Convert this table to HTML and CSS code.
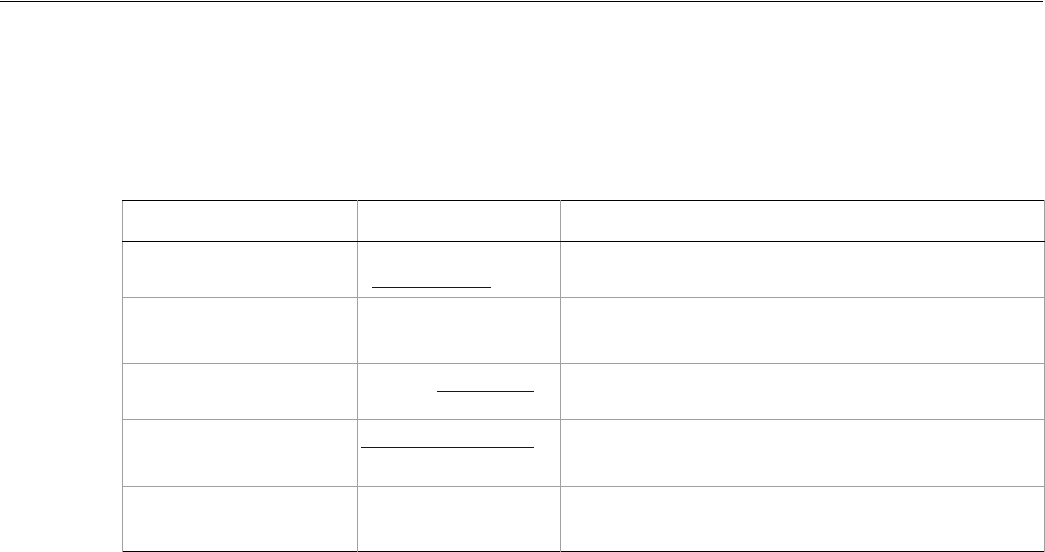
FILE: index.html
```html
<!DOCTYPE html>
<html>
<head>
<meta charset="utf-8">
<link rel="stylesheet" href="styles.css">
</head>
<body>
<div class="topbar"></div>
<main class="content">
  <table class="grid">
    <colgroup>
      <col class="c1"><col class="c2"><col class="c3">
    </colgroup>
    <thead>
      <tr class="r-head"><th></th><th></th><th></th></tr>
    </thead>
    <tbody>
      <tr class="r1"><td></td><td><a class="lnk lnk-a" href="#"></a></td><td></td></tr>
      <tr class="r2"><td></td><td></td><td></td></tr>
      <tr class="r3"><td></td><td><a class="lnk lnk-b" href="#"></a></td><td></td></tr>
      <tr class="r4"><td></td><td><a class="lnk lnk-c" href="#"></a></td><td></td></tr>
      <tr class="r5"><td></td><td></td><td></td></tr>
    </tbody>
  </table>
</main>
</body>
</html>
```
FILE: styles.css
```css
html, body {
  margin: 0;
  padding: 0;
  background: #fff;
  font-family: "Liberation Sans", Arial, sans-serif;
}
.topbar {
  margin-top: 1px;
  width: 1043px;
  border-top: 1px solid #000;
}
.content {
  padding: 198px 0 0 122px;
}
.grid {
  border-collapse: collapse;
  table-layout: fixed;
  border-top: 1px solid #000;
  border-bottom: 1px solid #000;
}
.c1 { width: 235px; }
.c2 { width: 203px; }
.c3 { width: 484px; }
.grid th, .grid td {
  padding: 0;
  vertical-align: top;
  border-left: 1px solid #a0a0a0;
  border-right: 1px solid #a0a0a0;
  border-top: 1px solid #a0a0a0;
}
.grid th {
  border-top: 1px solid #000;
  border-bottom: 1px solid #000;
}
.r-head { height: 41px; }
.r1 { height: 56px; }
.r2 { height: 66px; }
.r3 { height: 56px; }
.r4 { height: 67px; }
.r5 { height: 65px; }
.lnk {
  display: block;
  height: 0;
  border-bottom: 1px solid #0000cc;
}
.lnk-a { margin: 45px 0 0 14px; width: 119px; }
.lnk-b { margin: 27px 0 0 79px; width: 97px; }
.lnk-c { margin: 27px 0 0 3px; width: 173px; }
```
